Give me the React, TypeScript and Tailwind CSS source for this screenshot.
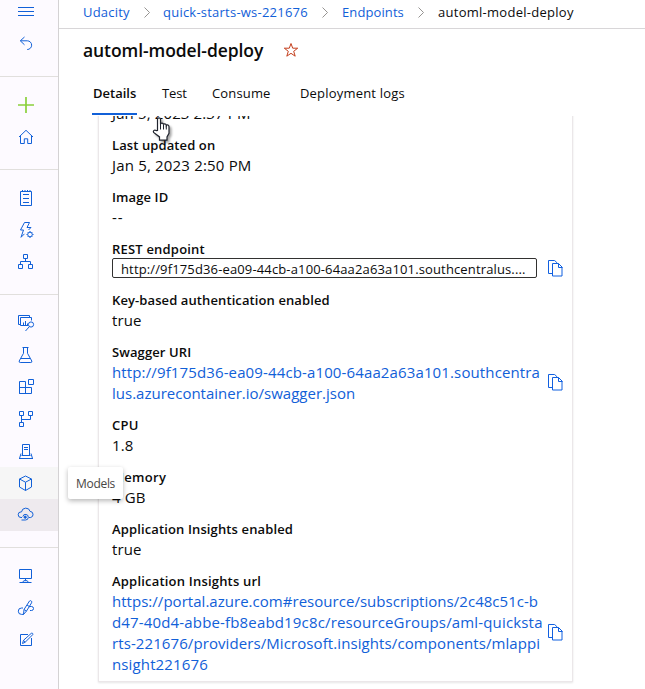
import type { ReactNode } from "react";

function Icon({
  children,
  className = "",
  color = "text-[#1160d8]",
}: {
  children: ReactNode;
  className?: string;
  color?: string;
}) {
  return (
    <svg
      viewBox="0 0 16 16"
      className={`h-4 w-4 shrink-0 overflow-visible ${color} ${className}`}
      fill="none"
      stroke="currentColor"
      strokeWidth="1"
    >
      {children}
    </svg>
  );
}

function NavItem({ children, className = "" }: { children: ReactNode; className?: string }) {
  return <div className={`flex h-8 w-full items-center pl-[18px] ${className}`}>{children}</div>;
}

function Divider({ className = "" }: { className?: string }) {
  return <div className={`h-px w-full shrink-0 bg-[#e1dfdd] ${className}`} />;
}

function Sidebar() {
  return (
    <nav className="flex h-full w-[59px] shrink-0 flex-col border-r border-[#d4d2d4] bg-[#fdfaff]">
      <div className="h-[28px]">
        <Icon className="ml-[18px] mt-[4px]">
          <path d="M0 3.5h16M0 7.5h16M0 11.5h16" />
        </Icon>
      </div>
      <NavItem>
        <Icon>
          <path d="M6.5 1 2.3 4.8 6.5 8.8M2.5 4.8h6.8a4.3 4.3 0 0 1 0 8.7H9" />
        </Icon>
      </NavItem>
      <Divider className="mt-4" />
      <NavItem className="mt-3">
        <Icon color="text-[#8bd03c]">
          <path d="M8 0v16M0 8h16" strokeWidth="1.7" />
        </Icon>
      </NavItem>
      <NavItem>
        <Icon>
          <path d="M1 8 8 1.3 15 8M2.5 7v7.5h3.8V9.8h3.4v4.7h3.8V7" />
        </Icon>
      </NavItem>
      <Divider className="mt-4" />
      <NavItem className="mt-3">
        <Icon>
          <path d="M2.5 1.5h11v14h-11zM4.5 0v1.5M7 0v1.5M9.5 0v1.5M12 0v1.5M5 4.5h6M5 8.5h6M5 12.5h6" />
        </Icon>
      </NavItem>
      <NavItem>
        <Icon>
          <path d="M11.5.5h-5L2.5 8h3L3 15.3l3.5-3.5M11.5.5 9 5.5h4L10.5 8" />
          <circle cx="12" cy="12.5" r="2.3" />
          <path d="M12 9v1M12 15v1M8.5 12.5h1M14.5 12.5h1M9.6 10.1l.7.7M13.7 14.2l.7.7M14.4 10.1l-.7.7M10.3 14.2l-.7.7" />
        </Icon>
      </NavItem>
      <NavItem>
        <Icon>
          <path d="M5.5.5h4v4h-4zM.5 10.5h4v4h-4zM10.5 10.5h4v4h-4zM7.5 4.5v3M2.5 10.5v-3h10v3" />
        </Icon>
      </NavItem>
      <Divider className="mt-4" />
      <NavItem className="mt-3">
        <Icon>
          <path d="M2.5 9.5h-2v-9h11v2M10 10.5H2.5v-8h11v3M5.5 10V7.5M7.5 10V6M9.5 10V8.5M11 12l-3.5 4" />
          <circle cx="13" cy="9.5" r="2.6" />
        </Icon>
      </NavItem>
      <NavItem>
        <Icon>
          <path d="M4.5.5h6M5.5.5v5.8L1.2 14q-.4 1.5 1 1.5h10.6q1.4 0 1-1.5L9.5 6.3V.5M3 11.5h9" />
        </Icon>
      </NavItem>
      <NavItem>
        <Icon>
          <path d="M1.5 2.5h6v12h-6zM1.5 8.5h12v6h-12zM7.5 8.5v6M10.5.5h5v5h-5z" />
        </Icon>
      </NavItem>
      <NavItem>
        <Icon>
          <path d="M1.5.5h4v4h-4zM10.5.5h4v4h-4zM1.5 11.5h4v4h-4zM3.5 4.5v7M3.5 8.5h9v-4" />
        </Icon>
      </NavItem>
      <NavItem>
        <Icon>
          <path d="M4.5 12.5V1.5h7v11M6 4.5h4M6 6.5h4M3 10.5l-1.5 5h13l-1.5-5M1 15.5h14M3.5 12.5h9" />
        </Icon>
      </NavItem>
      <NavItem className="bg-[#f6f6f6]">
        <Icon>
          <path d="M7.5 1 1.5 4v8l6 3.5 6-3.5V4zM1.5 4l6 3.2 6-3.2M7.5 7.2v8.3" />
        </Icon>
      </NavItem>
      <NavItem className="bg-[#eeeaee]">
        <Icon>
          <path d="M4 10.5H3a2.8 2.8 0 0 1 0-5.6h.5a4.4 4.4 0 0 1 8.6-.5 3.1 3.1 0 0 1 .6 6.1H11" />
          <path d="M3.5 13h4a2.8 2.8 0 1 0-2.7-3.4" />
          <circle cx="7.2" cy="10.2" r="1.1" fill="currentColor" />
        </Icon>
      </NavItem>
      <Divider className="mt-4" />
      <NavItem className="mt-3">
        <Icon>
          <path d="M1.5 1.5h12v9h-12zM7.5 10.5v2M1.5 14.5h3l1.3-1.8h3.4l1.3 1.8h3M3.5 14.5h8" />
        </Icon>
      </NavItem>
      <NavItem>
        <Icon>
          <path d="M5.5 14.5 6 9.5 11.5 1q1-.8 1.8 0 .8.6.3 1.8L8.5 11zM9 5l3 2M6 9.5l2.5 1.5M5 8H3.5a3.2 3.2 0 0 0 0 6.4h2M11.5 6.5h2a2 2 0 0 1 0 4H12" />
        </Icon>
      </NavItem>
      <NavItem>
        <Icon>
          <path d="M10 2.5H2.5v11h11V6M4.5 11.5l1-3.2 7.8-7q.9-.5 1.4.2.5.8-.2 1.4l-7.4 7.4zM5.5 8.3l1.8 2" />
        </Icon>
      </NavItem>
    </nav>
  );
}

function Chevron({ className = "" }: { className?: string }) {
  return (
    <svg viewBox="0 0 6 11" className={`h-[11px] w-[6px] shrink-0 ${className}`} fill="none" stroke="#8a8886" strokeWidth="0.9">
      <path d="M.5.5 5.5 5.5 .5 10.5" />
    </svg>
  );
}

function CopyIcon({ className = "" }: { className?: string }) {
  return (
    <svg
      viewBox="0 0 15 17"
      className={`h-[17px] w-[15px] shrink-0 ${className}`}
      fill="none"
      stroke="#1160e0"
    >
      <path d="M4.5 13.5h-4V.5h6.2l2.8 2.8M4.5 3.5h6l3.5 3.5v9h-9.5zM10.5 3.5v4h4" />
    </svg>
  );
}

function Item({
  label,
  track = "tracking-[0.1px]",
  children,
}: {
  label: string;
  track?: string;
  children: ReactNode;
}) {
  return (
    <div className="mb-[10px]">
      <div className={`h-[21px] whitespace-nowrap text-[13px] font-semibold leading-[21px] ${track}`}>{label}</div>
      {children}
    </div>
  );
}

function Line({ children, track = "tracking-[0.13px]" }: { children: ReactNode; track?: string }) {
  return <div className={`h-[21px] whitespace-nowrap text-[15px] leading-[19px] ${track}`}>{children}</div>;
}

function Cursor() {
  return (
    <svg viewBox="0 0 20 25" className="absolute left-[152px] top-[117px] h-[25px] w-[20px] overflow-visible drop-shadow-[2px_2px_1px_rgba(0,0,0,0.35)]">
      <path
        d="M5.5 13.5V2.2Q5.7.8 7 .8t1.5 1.4v5q.2-1.2 1.5-1.1 1.4.1 1.5 1.5.3-.9 1.4-.8 1.3.2 1.4 1.6.3-.6 1.2-.5 1.4.2 1.5 1.7v6.7l-2 3.6v3.2H7.5v-3.2L1.6 15.4Q.9 14 1.9 13.4t2.4.2z"
        fill="white"
        stroke="#20242e"
        strokeWidth="1.2"
      />
      <path d="M8.5 7v5.5M11.5 7.5v5M14.3 8.5v4" stroke="#20242e" fill="none" />
    </svg>
  );
}

export default function App() {
  return (
    <div className="relative flex h-[689px] w-[645px] overflow-hidden bg-white font-['Open_Sans','Noto_Sans',sans-serif] text-[#0b0b0b]">
      <Sidebar />
      <main className="flex min-w-0 flex-1 flex-col">
        <header className="flex h-[29px] shrink-0 items-center whitespace-nowrap border-b border-[#d8d6d8] pb-[3px] pl-6 text-[13px]">
          <span className="w-[47px] tracking-[0.2px] text-[#1160d8]">Udacity</span>
          <Chevron className="ml-[14px]" />
          <span className="ml-[13px] w-[145px] tracking-[0.23px] text-[#1160d8]">quick-starts-ws-221676</span>
          <Chevron className="ml-[14px]" />
          <span className="ml-[14px] w-[62px] tracking-[0.1px] text-[#1160d8]">Endpoints</span>
          <Chevron className="ml-[14px]" />
          <span className="ml-[14px] tracking-[0.27px]">automl-model-deploy</span>
        </header>
        <div className="flex h-[43px] shrink-0 items-center pl-6">
          <h1 className="w-[200px] whitespace-nowrap text-[17.5px] font-semibold tracking-[-0.08px]">automl-model-deploy</h1>
          <svg viewBox="0 0 16 16" className="-mt-px h-4 w-4" fill="none" stroke="#c43e1c">
            <path d="M8 1.5l1.7 4.7h5l-4 3.1 1.5 4.9L8 11.3l-4.2 2.9 1.5-4.9-4-3.1h5z" />
          </svg>
        </div>
        <div className="flex h-[44px] shrink-0 whitespace-nowrap pl-[33px] text-[13px] leading-[42px]">
          <div className="h-[43px] w-[45px] border-b-2 border-[#1160d8] pl-px font-semibold">Details</div>
          <div className="ml-[25px] w-[50px] tracking-[-0.1px]">Test</div>
          <div className="w-[88px] tracking-[0.15px]">Consume</div>
          <div className="tracking-[0.19px]">Deployment logs</div>
        </div>
        <div className="min-h-0 flex-1 overflow-hidden pl-[39px]">
          <section className="-mt-[13px] h-[579px] w-[475px] border border-[#ebe7e9] pl-[13px] shadow-[0_1px_2px_rgba(0,0,0,0.1)]">
            <Line>Jan 5, 2023 2:37 PM</Line>
            <div className="h-[10px]" />
            <Item label="Last updated on">
              <Line track="tracking-[0.18px]">Jan 5, 2023 2:50 PM</Line>
            </Item>
            <Item label="Image ID">
              <Line track="tracking-[1px]">--</Line>
            </Item>
            <Item label="REST endpoint" track="tracking-[0.2px]">
              <div className="-mt-[2px] mb-[12px] flex h-5 items-center">
                <div className="h-5 w-[425px] whitespace-nowrap rounded-[2px] border border-[#323130] pl-2 text-[13px] leading-[20px] tracking-[0.14px]">
                  http://9f175d36-ea09-44cb-a100-64aa2a63a101.southcentralus....
                </div>
                <CopyIcon className="ml-[11px]" />
              </div>
            </Item>
            <Item label="Key-based authentication enabled">
              <Line>true</Line>
            </Item>
            <Item label="Swagger URI">
              <div className="flex items-center text-[#1160d8]">
                <div className="w-[436px]">
                  <Line>http://9f175d36-ea09-44cb-a100-64aa2a63a101.southcentra</Line>
                  <Line track="tracking-[0px]">lus.azurecontainer.io/swagger.json</Line>
                </div>
                <CopyIcon className="mb-[3px]" />
              </div>
            </Item>
            <Item label="CPU" track="tracking-[0.3px]">
              <Line>1.8</Line>
            </Item>
            <Item label="Memory" track="tracking-[0.3px]">
              <Line>4 GB</Line>
            </Item>
            <Item label="Application Insights enabled" track="tracking-[0.13px]">
              <Line>true</Line>
            </Item>
            <Item label="Application Insights url" track="tracking-[0.2px]">
              <div className="flex items-center text-[#1160d8]">
                <div className="w-[436px]">
                  <Line track="tracking-[0.03px]">https://portal.azure.com#resource/subscriptions/2c48c51c-b</Line>
                  <Line track="tracking-[0.16px]">d47-40d4-abbe-fb8eabd19c8c/resourceGroups/aml-quicksta</Line>
                  <Line track="tracking-[0.09px]">rts-221676/providers/Microsoft.insights/components/mlappi</Line>
                  <Line>nsight221676</Line>
                </div>
                <CopyIcon className="mb-[3px]" />
              </div>
            </Item>
          </section>
        </div>
      </main>
      <div className="absolute left-[68px] top-[467px] flex h-8 w-[55px] items-center rounded-[2px] bg-white pl-2 pt-px text-[12px] tracking-[-0.3px] text-[#484644] shadow-[0_2px_5px_rgba(0,0,0,0.28)]">
        Models
      </div>
      <Cursor />
    </div>
  );
}
